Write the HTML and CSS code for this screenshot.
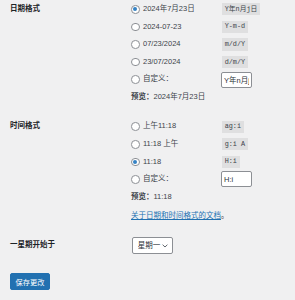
FILE: index.html
```html
<!DOCTYPE html>
<html lang="zh-CN">
<head>
    <meta charset="UTF-8">
    <meta name="viewport" content="width=device-width, initial-scale=1.0">
    <title>常规选项</title>
    <link rel="stylesheet" href="styles.css">
</head>
<body>
    <form class="settings">
        <div class="field-row date-row">
            <div class="field-label">日期格式</div>
            <div class="field-body">
                <label class="option">
                    <input type="radio" name="date_format" checked>
                    <span class="option-text">2024年7月23日</span>
                    <code>Y年n月j日</code>
                </label>
                <label class="option">
                    <input type="radio" name="date_format">
                    <span class="option-text">2024-07-23</span>
                    <code>Y-m-d</code>
                </label>
                <label class="option">
                    <input type="radio" name="date_format">
                    <span class="option-text">07/23/2024</span>
                    <code>m/d/Y</code>
                </label>
                <label class="option">
                    <input type="radio" name="date_format">
                    <span class="option-text">23/07/2024</span>
                    <code>d/m/Y</code>
                </label>
                <label class="option">
                    <input type="radio" name="date_format">
                    <span class="option-text">自定义：</span>
                    <input type="text" class="small-text" value="Y年n月j日">
                </label>
                <p class="preview"><strong>预览：</strong> 2024年7月23日</p>
            </div>
        </div>

        <div class="field-row time-row">
            <div class="field-label">时间格式</div>
            <div class="field-body">
                <label class="option">
                    <input type="radio" name="time_format">
                    <span class="option-text">上午11:18</span>
                    <code>ag:i</code>
                </label>
                <label class="option">
                    <input type="radio" name="time_format">
                    <span class="option-text">11:18 上午</span>
                    <code>g:i A</code>
                </label>
                <label class="option">
                    <input type="radio" name="time_format" checked>
                    <span class="option-text">11:18</span>
                    <code>H:i</code>
                </label>
                <label class="option">
                    <input type="radio" name="time_format">
                    <span class="option-text">自定义：</span>
                    <input type="text" class="small-text" value="H:i">
                </label>
                <p class="preview"><strong>预览：</strong> 11:18</p>
                <p class="doc-link"><a href="#">关于日期和时间格式的文档</a>。</p>
            </div>
        </div>

        <div class="field-row week-row">
            <div class="field-label">一星期开始于</div>
            <div class="field-body">
                <span class="select-wrap">
                    <select class="week-select">
                        <option>星期一</option>
                        <option>星期日</option>
                    </select>
                    <svg class="chevron" width="6" height="4" viewBox="0 0 6 4" fill="none" stroke="#50575e" stroke-width="0.9">
                        <path d="M0.6 0.7 L3 3 L5.4 0.7"/>
                    </svg>
                </span>
            </div>
        </div>

        <div class="submit-row">
            <button type="submit" class="button-primary">保存更改</button>
        </div>
    </form>
</body>
</html>
```

FILE: styles.css
```css
* {
    margin: 0;
    padding: 0;
    box-sizing: border-box;
}

body {
    font-family: "Liberation Sans", "Noto Sans CJK SC", sans-serif;
    font-size: 7.5px;
    background-color: #f0f0f1;
    color: #3c434a;
    line-height: 1.4;
}

.settings {
    padding: 0.5px 10px 0;
}

.field-row {
    display: grid;
    grid-template-columns: 121px 1fr;
}

.field-label {
    height: 17.6px;
    display: flex;
    align-items: center;
    font-weight: 600;
    color: #1d2327;
}

.time-row {
    margin-top: 11.8px;
}

.week-row {
    margin-top: 16.3px;
    align-items: center;
}

.week-row .field-label {
    height: 16.7px;
}

.option,
.preview {
    height: 17.6px;
    display: flex;
    align-items: center;
}

.option input[type="radio"] {
    appearance: none;
    width: 8.6px;
    height: 8.6px;
    border: 1px solid #8c8f94;
    border-radius: 50%;
    background: #fff;
    margin-right: 3.4px;
    display: flex;
    align-items: center;
    justify-content: center;
    flex-shrink: 0;
}

.option input[type="radio"]:checked::before {
    content: '';
    width: 4.2px;
    height: 4.2px;
    border-radius: 50%;
    background-color: #3582c4;
}

.option-text {
    width: 79px;
    flex-shrink: 0;
}

code {
    font-family: "Liberation Mono", "Noto Sans CJK SC", monospace;
    font-size: 6.8px;
    background: rgba(0, 0, 0, 0.07);
    padding: 1.6px 2.7px 1.1px;
    color: #3c434a;
}

.small-text {
    width: 30.7px;
    height: 16px;
    border: 1px solid #8c8f94;
    border-radius: 2px;
    background: #fff;
    font-family: inherit;
    font-size: 7.5px;
    color: #2c3338;
    padding: 0 2px;
    margin-left: -1px;
    overflow: hidden;
}

.preview strong {
    color: #3c434a;
    font-weight: 700;
}

.doc-link {
    margin-top: 5.1px;
    height: 10px;
    display: flex;
    align-items: center;
}

.doc-link a {
    color: #2271b1;
    text-decoration: underline;
}

.select-wrap {
    position: relative;
    display: inline-block;
    margin-left: 0.7px;
}

.week-select {
    appearance: none;
    width: 41px;
    height: 16.7px;
    border: 1px solid #8c8f94;
    border-radius: 2px;
    background: #fff;
    font-family: inherit;
    font-size: 7.5px;
    color: #2c3338;
    padding: 0 10px 0 5px;
    display: block;
}

.chevron {
    position: absolute;
    right: 5px;
    top: 6.5px;
}

.submit-row {
    margin-top: 19.3px;
}

.button-primary {
    width: 40px;
    height: 16.7px;
    background: #2271b1;
    border: 1px solid #2271b1;
    border-radius: 2px;
    color: #fff;
    font-family: inherit;
    font-size: 7.2px;
    cursor: pointer;
}
```
